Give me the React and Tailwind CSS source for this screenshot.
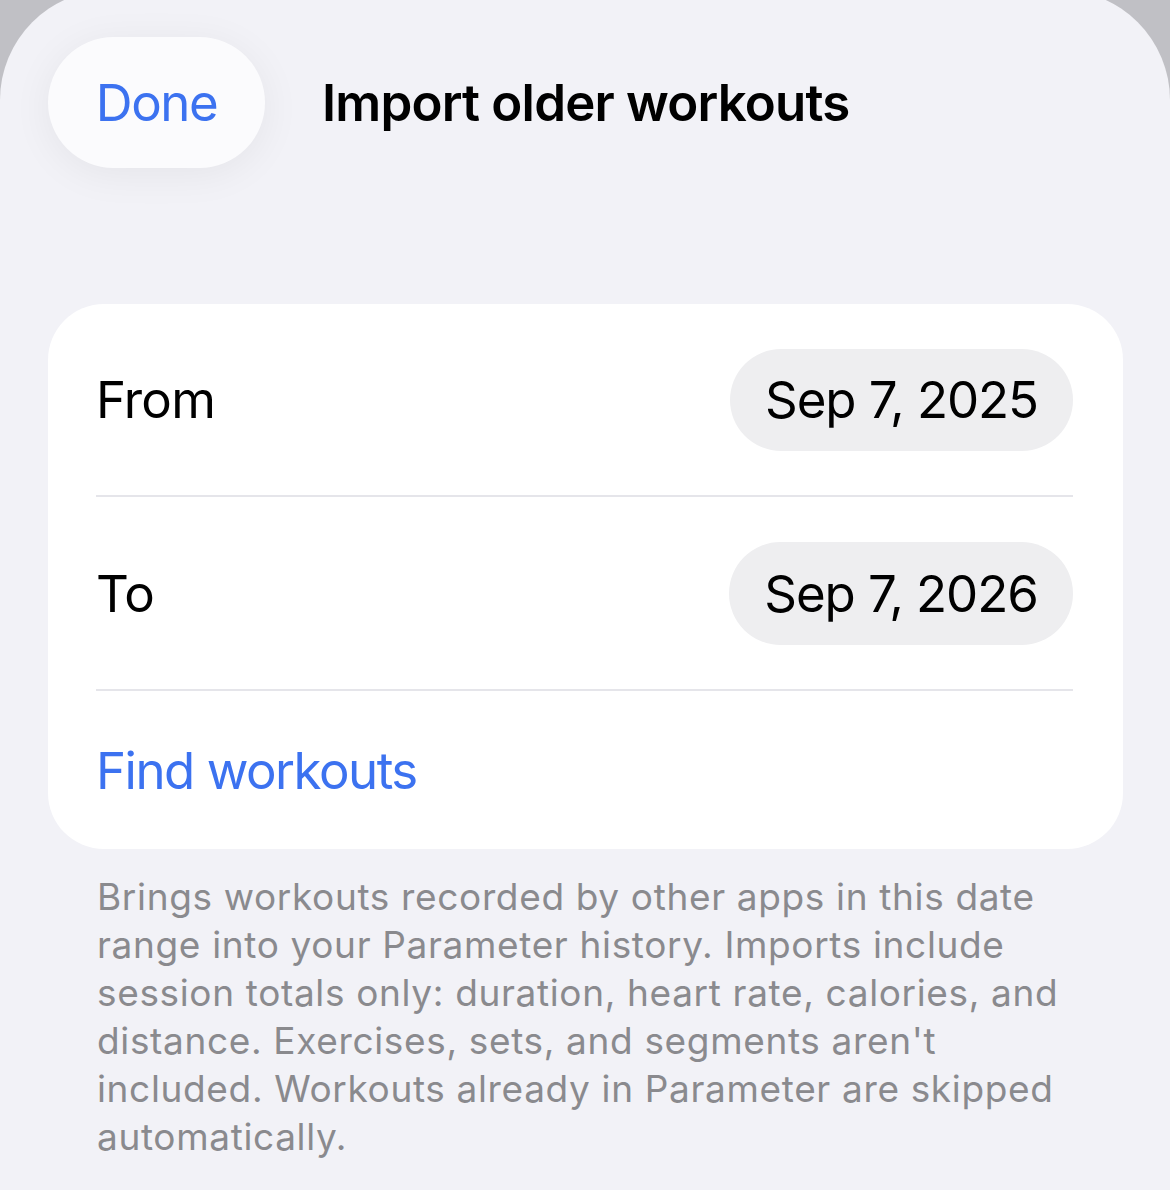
export default function App() {
  const font = { fontFamily: '"Inter", "Noto Sans", sans-serif' };
  return (
    <div className="w-[1170px] h-[1190px] bg-[#c0c0c5] overflow-hidden" style={font}>
      <div className="mt-[-10px] h-[1210px] bg-[#f2f2f7] rounded-t-[110px] flex flex-col">
        <div className="flex items-center pl-[48px] mt-[47px]">
          <div className="w-[217px] h-[131px] rounded-full bg-[#fbfbfd] shadow-[0_6px_40px_rgba(0,0,0,0.06)] flex items-center justify-center">
            <span className="text-[51px] leading-none text-[#3c72f0] tracking-[-1.5px]">Done</span>
          </div>
          <div className="ml-[57px] text-[51px] leading-none font-semibold text-black tracking-[-0.8px]">
            Import older workouts
          </div>
        </div>

        <div className="mt-[136px] ml-[48px] w-[1075px] bg-white rounded-[56px] pl-[48px] pr-[50px]">
          <div className="h-[193px] flex items-center justify-between border-b-2 border-[#e5e5ea]">
            <span className="text-[51px] leading-none text-black tracking-[-0.8px]">From</span>
            <div className="w-[343px] h-[102px] rounded-full bg-[#eeeef0] flex items-center justify-center">
              <span className="text-[51px] leading-none text-black tracking-[-1.1px]">Sep 7, 2025</span>
            </div>
          </div>
          <div className="h-[194px] flex items-center justify-between border-b-2 border-[#e5e5ea]">
            <span className="text-[51px] leading-none text-black tracking-[-0.8px]">To</span>
            <div className="w-[344px] h-[103px] rounded-full bg-[#eeeef0] flex items-center justify-center">
              <span className="text-[51px] leading-none text-black tracking-[-1.1px]">Sep 7, 2026</span>
            </div>
          </div>
          <div className="h-[158px] flex items-center">
            <span className="text-[51px] leading-none text-[#3c72f0] tracking-[-1.5px]">Find workouts</span>
          </div>
        </div>

        <div className="mt-[24px] ml-[97px] w-[1000px] text-[37px] leading-[48px] text-[#8a8a8e] tracking-[0.65px]">
          <div className="whitespace-nowrap">Brings workouts recorded by other apps in this date</div>
          <div className="whitespace-nowrap">range into your Parameter history. Imports include</div>
          <div className="whitespace-nowrap">session totals only: duration, heart rate, calories, and</div>
          <div className="whitespace-nowrap">distance. Exercises, sets, and segments aren't</div>
          <div className="whitespace-nowrap">included. Workouts already in Parameter are skipped</div>
          <div className="whitespace-nowrap">automatically.</div>
        </div>
      </div>
    </div>
  );
}
